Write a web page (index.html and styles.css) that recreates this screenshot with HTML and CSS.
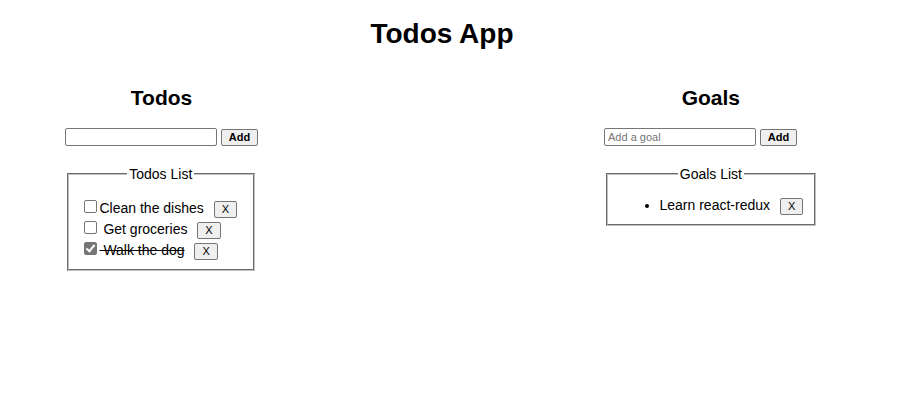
FILE: index.html
```html
<!DOCTYPE html>
<html lang="en">
<head>
<meta charset="utf-8">
<title>Todos App</title>
<link rel="stylesheet" href="styles.css">
</head>
<body>
<div class="app">
  <h1 class="app-title">Todos App</h1>
  <div class="columns">
    <section class="column">
      <h2 class="column-title">Todos</h2>
      <div class="add-row">
        <input class="text-input" type="text">
        <button class="btn btn-add">Add</button>
      </div>
      <fieldset class="list-box">
        <legend class="list-legend">Todos List</legend>
        <ul class="todo-list">
          <li class="item"><input class="check" type="checkbox"><span>Clean the dishes</span> <button class="btn btn-x btn-x-todo">X</button></li>
          <li class="item"><input class="check" type="checkbox"><span> Get groceries</span> <button class="btn btn-x btn-x-todo">X</button></li>
          <li class="item"><input class="check" type="checkbox" checked><span class="done"> Walk the dog</span> <button class="btn btn-x btn-x-todo">X</button></li>
        </ul>
      </fieldset>
    </section>
    <section class="column">
      <h2 class="column-title">Goals</h2>
      <div class="add-row">
        <input class="text-input" type="text" placeholder="Add a goal">
        <button class="btn btn-add">Add</button>
      </div>
      <fieldset class="list-box">
        <legend class="list-legend">Goals List</legend>
        <ul class="goal-list">
          <li class="item"><span>Learn react-redux</span> <button class="btn btn-x">X</button></li>
        </ul>
      </fieldset>
    </section>
  </div>
</div>
</body>
</html>
```
FILE: styles.css
```css
html, body {
  margin: 0;
  padding: 0;
  background: #ffffff;
}

body {
  font-family: "Liberation Sans", Arial, sans-serif;
  font-size: 14px;
  color: #000000;
}

.app-title {
  margin: 18px 0 36px;
  padding-right: 22px;
  font-size: 28px;
  line-height: 32px;
  font-weight: bold;
  text-align: center;
}

.columns {
  display: flex;
  align-items: flex-start;
  gap: 346px;
  padding-left: 65px;
}

.column {
  display: flex;
  flex-direction: column;
  align-items: flex-start;
}

.column-title {
  align-self: stretch;
  margin: 0 0 18px;
  font-size: 21px;
  line-height: 24px;
  font-weight: bold;
  text-align: center;
}

.add-row {
  display: flex;
  align-items: center;
  gap: 4px;
  height: 18px;
}

.text-input {
  box-sizing: border-box;
  width: 152px;
  height: 18px;
  margin: 0;
  padding: 1px 3px;
  border: 1px solid #767676;
  border-radius: 2px;
  background: #ffffff;
  font-family: "Liberation Sans", Arial, sans-serif;
  font-size: 11px;
  color: #000000;
}

.text-input::placeholder {
  color: #757575;
}

.btn {
  box-sizing: border-box;
  height: 17px;
  margin: 0;
  padding: 0 6px;
  border: 1px solid #767676;
  border-radius: 2px;
  background: #efefef;
  color: #000000;
  font-family: "Liberation Sans", Arial, sans-serif;
  font-size: 11px;
  line-height: 15px;
}

.btn-add {
  width: 37px;
  padding: 0;
  font-weight: bold;
}

.btn-x {
  padding: 0 7px;
  margin-left: 6px;
}

.btn-x-todo {
  margin-right: 5px;
}

.list-box {
  margin: 20px 2px 0;
  padding: 0.35em 0.75em 0.625em;
  border: 2px groove #c0c0c0;
}

.list-legend {
  margin: 0 auto;
  padding: 0 2px;
  font-size: 14px;
  line-height: 16px;
}

.todo-list,
.goal-list {
  margin: 10px 0 0;
  line-height: 16px;
}

.todo-list {
  list-style: none;
  padding: 0;
}

.goal-list {
  list-style: disc;
  padding-left: 41px;
}

.item {
  white-space: nowrap;
}

.check {
  -webkit-appearance: none;
  appearance: none;
  position: relative;
  display: inline-block;
  box-sizing: border-box;
  width: 13px;
  height: 13px;
  margin: 3px 3px 0 4px;
  border: 1px solid #767676;
  border-radius: 2px;
  background: #ffffff;
  vertical-align: baseline;
}

.check:checked {
  background: #767676;
}

.check:checked::after {
  content: "";
  position: absolute;
  left: 3px;
  top: 0px;
  width: 3px;
  height: 7px;
  border-right: 2px solid #ffffff;
  border-bottom: 2px solid #ffffff;
  transform: rotate(40deg);
}

.done {
  text-decoration: line-through;
}
```
